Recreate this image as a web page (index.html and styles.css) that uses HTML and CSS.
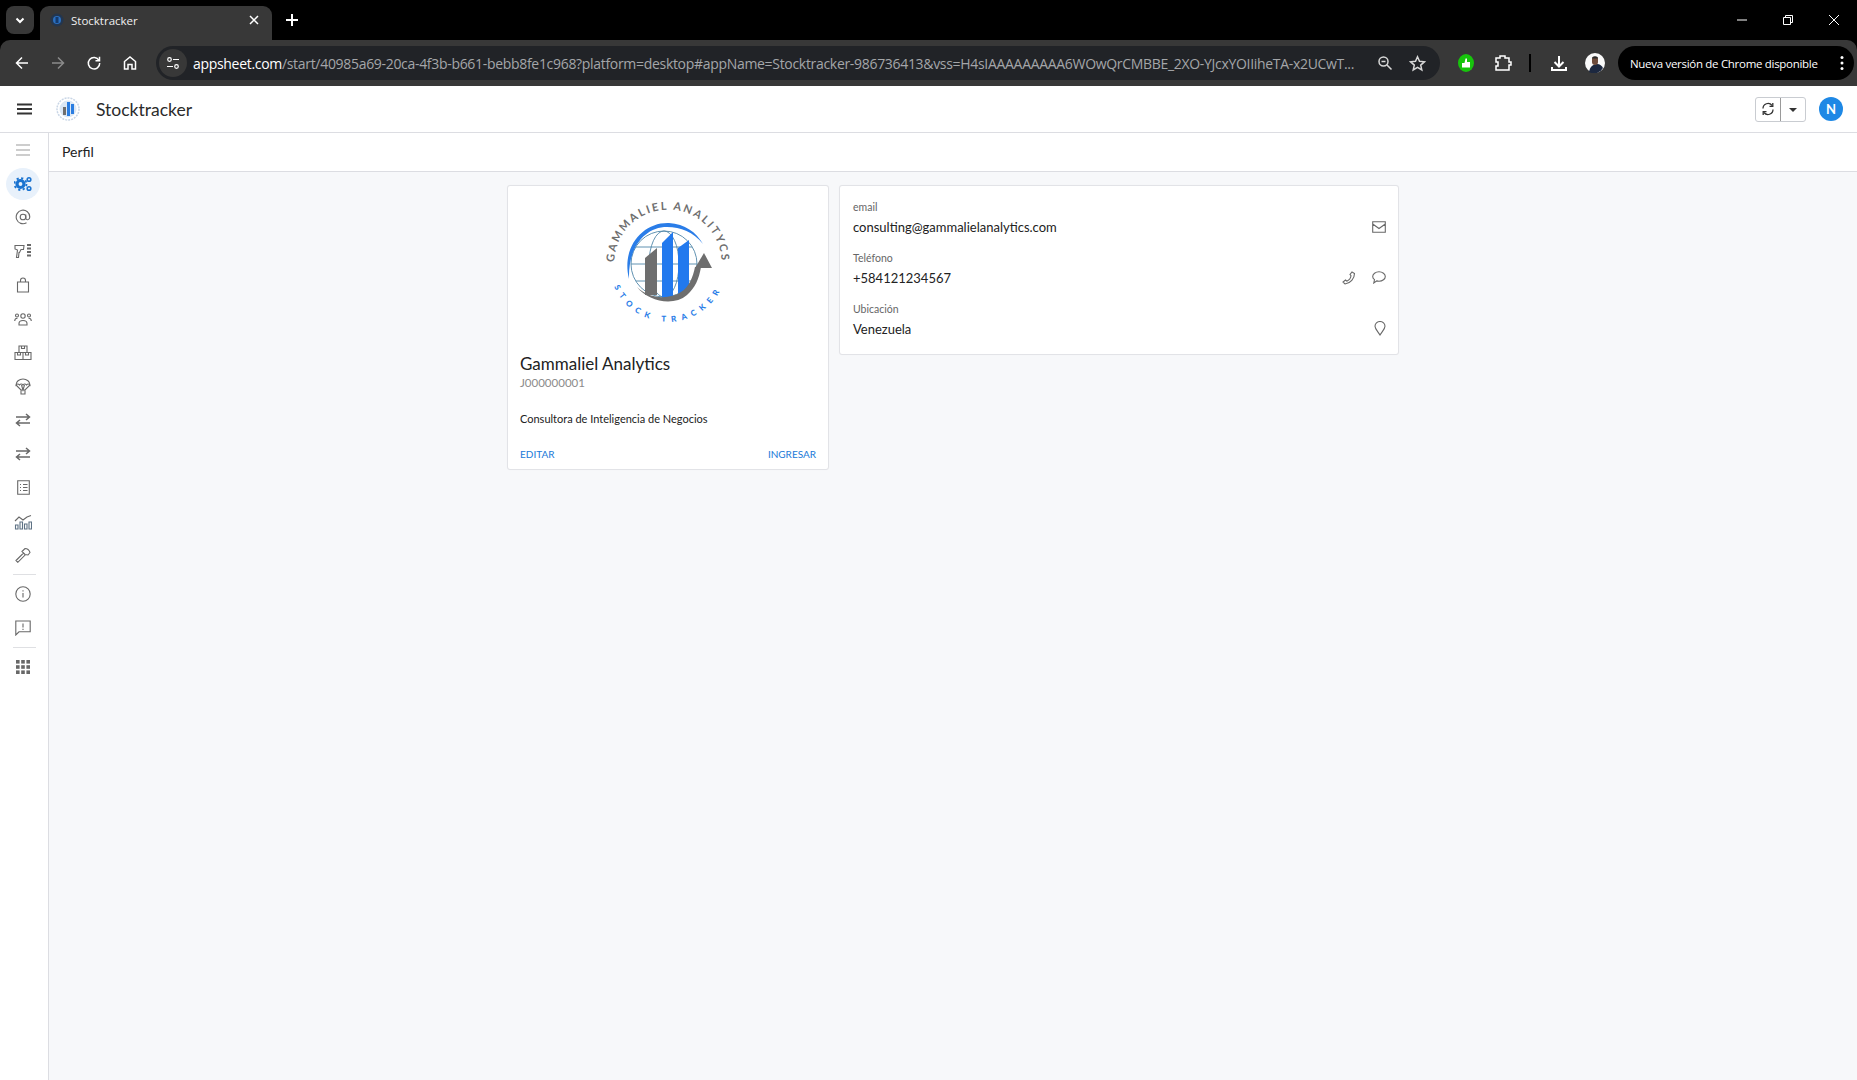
FILE: index.html
```html
<!DOCTYPE html>
<html lang="es">
<head>
<meta charset="utf-8">
<title>Stocktracker</title>
<link rel="stylesheet" href="styles.css">
</head>
<body>
<header class="chrome-tabs">
  <button class="tab-list"><svg width="12" height="12" viewBox="0 0 12 12"><path d="M2.500 4.500 6 8l3.500-3.500" class="st-w2"/></svg></button>
  <div class="tab">
    <svg class="fav" width="14" height="14" viewBox="0 0 14 14"><circle cx="7" cy="7" r="6.500" fill="#23364f"/><circle cx="7" cy="7" r="4" fill="#2a6fc0"/><rect x="5.500" y="4" width="3" height="6" fill="#143a6c"/></svg>
    <span class="tab-title">Stocktracker</span>
    <svg width="12" height="12" viewBox="0 0 12 12"><path d="M2 2l8 8M10 2l-8 8" class="st-w15"/></svg>
  </div>
  <svg class="new-tab" width="14" height="14" viewBox="0 0 14 14"><path d="M7 1v12M1 7h12" class="st-w2"/></svg>
  <div class="win-ctrl">
    <svg width="12" height="12" viewBox="0 0 12 12"><path d="M1 6h10" class="st-w1"/></svg>
    <svg width="12" height="12" viewBox="0 0 12 12"><path d="M1.500 3.500h7v7h-7zM3.500 3.500v-2h7v7h-2" class="st-w1"/></svg>
    <svg width="12" height="12" viewBox="0 0 12 12"><path d="M1 1l10 10M11 1 1 11" class="st-w1"/></svg>
  </div>
</header>

<nav class="chrome-bar">
  <div class="nav-btn"><svg width="16" height="16" viewBox="0 0 16 16"><path d="M14 8H2.500M8 2.500 2.500 8 8 13.500" class="st-w15"/></svg></div>
  <div class="nav-btn"><svg width="16" height="16" viewBox="0 0 16 16"><path d="M2 8h11.500M8 2.500 13.500 8 8 13.500" class="st-g15"/></svg></div>
  <div class="nav-btn"><svg width="16" height="16" viewBox="0 0 16 16"><path d="M13 5.500A5.700 5.700 0 1 0 13.700 8M13.500 1.800v4h-4" class="st-w15"/></svg></div>
  <div class="nav-btn"><svg width="16" height="16" viewBox="0 0 16 16"><path d="M2.500 14V6.500L8 2l5.500 4.500V14H10V9.500H6V14z" class="st-w15"/></svg></div>
  <div class="omnibox">
    <span class="site-btn"><svg width="16" height="16" viewBox="0 0 16 16"><circle cx="4.500" cy="4.500" r="1.800" class="st-w12"/><path d="M8 4.500h6M2 11.500h6" class="st-w12"/><circle cx="11.500" cy="11.500" r="1.800" class="st-w12"/></svg></span>
    <span class="url"><b>appsheet.com</b>/start/40985a69-20ca-4f3b-b661-bebb8fe1c968?platform=desktop#appName=Stocktracker-986736413&amp;vss=H4sIAAAAAAAAA6WOwQrCMBBE_2XO-YJcxYOIIiheTA-x2UCwT...</span>
    <svg class="omni-zoom" width="16" height="16" viewBox="0 0 16 16"><circle cx="6.500" cy="6.500" r="4.500" class="st-l15"/><path d="M10 10l4.500 4.500M4.500 6.500h4" class="st-l15"/></svg>
    <svg class="omni-star" width="17" height="17" viewBox="0 0 17 17"><path d="M8.500 1.800l2 4.500 4.900.5-3.700 3.300 1.100 4.800-4.300-2.500-4.300 2.500 1.100-4.800L1.600 6.800l4.900-.5z" class="st-l15"/></svg>
  </div>
  <div class="ext-group">
    <svg width="16" height="18" viewBox="0 0 16 18"><ellipse cx="8" cy="9" rx="8" ry="9" fill="#17c40c"/><path d="M4 9h2.500l1-4.500h1.500V8H12v5.500H4z" fill="#fff"/></svg>
    <svg class="ext-puzzle" width="18" height="18" viewBox="0 0 18 18"><path d="M2 4h4V2h5v2h4v4h2v3h-2v5H2v-4h2V8H2z" class="st-w15"/></svg>
    <span class="tb-sep"></span>
    <svg class="ext-dl" width="18" height="18" viewBox="0 0 18 18"><path d="M9 2v10M4.500 8 9 12.500 13.500 8M2 13v3h14v-3" class="st-w2"/></svg>
    <svg width="20" height="20" viewBox="0 0 20 20"><circle cx="10" cy="10" r="10" fill="#fafafa"/><path d="M4 19c1-6 5-8 8-8s5 2 6 4a10 10 0 0 1-14 4z" fill="#1c2840"/><path d="M7 5.500C7 3 13 3 13 5.500V9c0 2-1 3-3 3s-3-1-3-3z" fill="#6e4c3c"/><path d="M7 5.500C7 2.500 13 2.500 13 5.500z" fill="#2a2a2a"/></svg>
  </div>
  <div class="update-pill"><span>Nueva versión de Chrome disponible</span><svg width="4" height="16" viewBox="0 0 4 16"><circle cx="2" cy="2.500" r="1.500" fill="#fff"/><circle cx="2" cy="8" r="1.500" fill="#fff"/><circle cx="2" cy="13.500" r="1.500" fill="#fff"/></svg></div>
</nav>

<header class="app-header">
  <svg width="15" height="12" viewBox="0 0 15 12"><path d="M0 1.500h15M0 6h15M0 10.500h15" class="st-d2"/></svg>
  <svg class="app-logo" width="24" height="24" viewBox="0 0 24 24"><circle cx="12" cy="12" r="11" fill="none" stroke="#c9d6e6" stroke-width="1.500" stroke-dasharray="2 1"/><circle cx="12" cy="12" r="8.500" fill="#dbe7f4"/><rect x="7" y="10" width="3" height="8" fill="#6e6e6e"/><rect x="11" y="5" width="3" height="14" fill="#2a7de1"/><rect x="15" y="7" width="3" height="10" fill="#2a7de1"/></svg>
  <span class="app-title">Stocktracker</span>
  <div class="sync-group">
    <span class="sync-btn"><svg width="14" height="14" viewBox="0 0 14 14"><path d="M2 6.500A5 5 0 0 1 11 3.500M12 7.500A5 5 0 0 1 3 10.500" class="st-d12"/><path d="M11.800 1v3.400H8.500M2.200 13V9.600h3.300" class="st-d12"/></svg></span>
    <span class="sync-caret"></span>
  </div>
  <span class="avatar">N</span>
</header>

<div class="app-body">
  <aside class="sidebar">
    <div class="sb-item"><svg width="16" height="12" viewBox="0 0 16 12"><path d="M1 1h14M1 6h14M1 11h14" class="ic-l"/></svg></div>
    <div class="sb-item"><span class="active-bg"><svg width="18" height="16" viewBox="0 0 18 16"><circle cx="6.500" cy="8" r="3.500" fill="none" stroke="#1a73d0" stroke-width="3.200"/><circle cx="6.500" cy="8" r="6" fill="none" stroke="#1a73d0" stroke-width="1.800" stroke-dasharray="2.200 2.500"/><circle cx="15" cy="3.500" r="1.800" fill="none" stroke="#1a73d0" stroke-width="1.600"/><circle cx="15" cy="12.500" r="1.800" fill="none" stroke="#1a73d0" stroke-width="1.600"/></svg></span></div>
    <div class="sb-item"><svg width="16" height="16" viewBox="0 0 16 16"><circle cx="8" cy="8" r="2.800" class="ic"/><path d="M10.800 5.500V9c0 2.500 4 2.300 4-1A6.800 6.800 0 1 0 11.500 13.800" class="ic"/></svg></div>
    <div class="sb-item"><svg width="18" height="15" viewBox="0 0 18 15"><path d="M1 1.500h9l-.5 4H7l-1.500 3H5L4.500 13.500H2.500L3.500 6 1 5z" class="ic"/><path d="M13 1h4M13 4.500h4M13 8h4M13 11.500h4" class="ic-b"/></svg></div>
    <div class="sb-item"><svg width="14" height="16" viewBox="0 0 14 16"><path d="M1.500 5h11v10h-11zM4.500 5V3.500a2.500 2.500 0 0 1 5 0V5" class="ic"/></svg></div>
    <div class="sb-item"><svg width="18" height="14" viewBox="0 0 18 14"><circle cx="9" cy="4" r="2.200" class="ic"/><path d="M5 13v-1.500c0-2 2-3 4-3s4 1 4 3V13z" class="ic"/><circle cx="3" cy="3.500" r="1.500" class="ic"/><circle cx="15" cy="3.500" r="1.500" class="ic"/><path d="M.7 9c0-2 1-2.800 2.800-2.800M17.300 9c0-2-1-2.800-2.800-2.800" class="ic"/></svg></div>
    <div class="sb-item"><svg width="18" height="15" viewBox="0 0 18 15"><path d="M1 7.500h16v7H1zM9 7.500v7M5 1h8v6.500H5zM7.500 1v2.500h3V1M3.500 7.500V10h3V7.500M11.500 7.500V10h3V7.500" class="ic"/></svg></div>
    <div class="sb-item"><svg width="16" height="17" viewBox="0 0 16 17"><path d="M1 7a7 6 0 0 1 14 0c-1-1.300-2.500-1.300-3.500 0-1-1.300-2.500-1.300-3.500 0-1-1.300-2.500-1.300-3.500 0C3.500 5.700 2 5.700 1 7zM1 7l5 5h4l5-5M6 12h4v4H6zM6.500 7 8 12l1.500-5" class="ic"/></svg></div>
    <div class="sb-item"><svg width="16" height="14" viewBox="0 0 16 14"><path d="M1 4h13.500M11 1l3.500 3L11 7M15 10H1.500M5 7l-3.500 3L5 13" class="ic-s"/></svg></div>
    <div class="sb-item"><svg width="16" height="14" viewBox="0 0 16 14"><path d="M1 4h13.500M11 1l3.500 3L11 7M15 10H1.500M5 7l-3.500 3L5 13" class="ic-s"/></svg></div>
    <div class="sb-item"><svg width="13" height="15" viewBox="0 0 13 15"><path d="M.7.700h11.600v13.600H.7zM3 4.500h1M6 4.500h4.500M3 7.500h1M6 7.500h4.500M3 10.500h1M6 10.500h4.500" class="ic"/></svg></div>
    <div class="sb-item"><svg width="18" height="16" viewBox="0 0 18 16"><path d="M1 7l4-4 4 3 4-3 4-1.500" class="ic"/><path d="M1.500 11h2.500v4H1.500zM6 8h2.500v7H6zM10.500 10H13v5h-2.500zM15 8h2.500v7H15z" class="ic-b2"/></svg></div>
    <div class="sb-item"><svg width="16" height="16" viewBox="0 0 16 16"><path d="M1 13.500l7.500-7.500 1.800 1.800L2.800 15.300zM7 4.500 10 1.500c2 0 4 1 5 4l-2 2.500-3-.5-3-3z" class="ic"/></svg></div>
    <div class="sb-sep"></div>
    <div class="sb-item"><svg width="16" height="16" viewBox="0 0 16 16"><circle cx="8" cy="8" r="7.200" class="ic"/><path d="M8 7v4.500M8 4.200v1.400" class="ic"/></svg></div>
    <div class="sb-item"><svg width="16" height="16" viewBox="0 0 16 16"><path d="M.8 1h14.400v10.800H4l-3.200 3.200zM8 3.500v4M8 8.800v1.200" class="ic"/></svg></div>
    <div class="sb-sep"></div>
    <div class="sb-item"><svg width="14" height="14" viewBox="0 0 14 14" class="grid-ic"><rect width="3.600" height="3.600"/><rect x="5.200" width="3.600" height="3.600"/><rect x="10.400" width="3.600" height="3.600"/><rect y="5.200" width="3.600" height="3.600"/><rect x="5.200" y="5.200" width="3.600" height="3.600"/><rect x="10.400" y="5.200" width="3.600" height="3.600"/><rect y="10.400" width="3.600" height="3.600"/><rect x="5.200" y="10.400" width="3.600" height="3.600"/><rect x="10.400" y="10.400" width="3.600" height="3.600"/></svg></div>
  </aside>

  <main class="main">
    <div class="crumb">Perfil</div>
    <div class="content">
      <section class="card profile">
        <svg class="logo" width="130" height="130" viewBox="0 0 130 130">
          <defs>
            <path id="ringTop" d="M11.600 72A53.700 53.700 0 1 1 118.400 72"/>
            <path id="ringBottom" d="M8 81A59 59 0 0 0 122 81"/>
          </defs>
          <text class="ring-top"><textPath href="#ringTop" startOffset="50%" text-anchor="middle">GAMMALIEL ANALITYCS</textPath></text>
          <text class="ring-bot"><textPath href="#ringBottom" startOffset="50%" text-anchor="middle">STOCK TRACKER</textPath></text>
          <g fill="none" stroke="#4f86a8" stroke-width=".9">
            <circle cx="61" cy="67" r="33"/>
            <ellipse cx="61" cy="67" rx="15" ry="33"/>
            <path d="M28 67h66M33 50h56M33 84h56"/>
          </g>
          <path d="M26 82C18 50 40 25 66 26 82 27 93 35 100 47 90 35 78 30 64 30 42 30 25 50 26 82z" fill="#2a7de8"/>
          <path d="M42 61l12-10v47H42z" fill="#6e6e6e"/>
          <path d="M59 46l11-11v65l-11 1z" fill="#2279ee"/>
          <path d="M75 51l11-8v48l-11 9z" fill="#2279ee"/>
          <path d="M34 90C45 104 70 110 84 98 92 91 96 82 98 70H92C90 80 86 90 78 95 66 103 46 102 34 90z" fill="#6e6e6e"/>
          <path d="M101 56 92 71h17z" fill="#6e6e6e"/>
        </svg>
        <h1 class="p-name">Gammaliel Analytics</h1>
        <div class="p-id">J000000001</div>
        <p class="p-desc">Consultora de Inteligencia de Negocios</p>
        <div class="p-actions"><a>EDITAR</a><a>INGRESAR</a></div>
      </section>
      <section class="card details">
        <div class="row">
          <div><div class="lbl">email</div><div class="val">consulting@gammalielanalytics.com</div></div>
          <div class="acts"><svg width="14" height="12" viewBox="0 0 14 12"><path d="M.7.700h12.600v10.600H.7zM.7 3l6.300 4.500L13.300 3" class="ic"/></svg></div>
        </div>
        <div class="row">
          <div><div class="lbl">Teléfono</div><div class="val">+584121234567</div></div>
          <div class="acts"><svg width="14" height="14" viewBox="0 0 14 14"><path d="M10 1l2.500 1.500c0 5-4 10-9.500 10.500L1 11l2.500-2 1.300 1.200c2-1 4-3.500 4.200-5.500L8 3.500z" class="ic"/></svg><svg width="14" height="13" viewBox="0 0 14 13"><path d="M7 .8c3.500 0 6.300 2.200 6.300 4.700S10.500 10.200 7 10.200c-.8 0-1.500-.1-2.200-.3L1.800 12l.7-3.400C1.300 7.800.7 6.700.7 5.500.7 3 3.500.8 7 .8z" class="ic"/></svg></div>
        </div>
        <div class="row">
          <div><div class="lbl">Ubicación</div><div class="val">Venezuela</div></div>
          <div class="acts"><svg width="12" height="15" viewBox="0 0 12 15"><path d="M6 14C4 10.500 1 8 1 5.300A5 4.800 0 0 1 11 5.300C11 8 8 10.500 6 14z" class="ic"/></svg></div>
        </div>
      </section>
    </div>
  </main>
</div>
</body>
</html>
```

FILE: styles.css
```css
* { box-sizing: border-box; }
html, body { margin: 0; height: 100%; }
body {
  width: 1857px;
  height: 1080px;
  overflow: hidden;
  display: flex;
  flex-direction: column;
  font-family: Lato, "Noto Sans", sans-serif;
  background: #000;
  color: #222;
}
svg { display: block; flex: none; }

/* stroke helpers */
.st-w1, .st-w12, .st-w15, .st-w2, .st-g15, .st-l15, .st-d2, .st-d12 { fill: none; }
.st-w1 { stroke: #fff; stroke-width: 1; }
.st-w12 { stroke: #fff; stroke-width: 1.2; }
.st-w15 { stroke: #fff; stroke-width: 1.5; }
.st-w2 { stroke: #fff; stroke-width: 2; }
.st-g15 { stroke: #8a8a8a; stroke-width: 1.5; }
.st-l15 { stroke: #d8d8d8; stroke-width: 1.5; }
.st-d2 { stroke: #333; stroke-width: 2; }
.st-d12 { stroke: #333; stroke-width: 1.3; }

/* tab strip */
.chrome-tabs {
  height: 40px;
  flex: none;
  background: #000;
  display: flex;
  align-items: flex-end;
  padding-left: 6px;
  color: #fff;
}
.tab-list {
  width: 28px;
  height: 28px;
  margin-bottom: 6px;
  border: 0;
  border-radius: 8px;
  background: #383838;
  display: flex;
  align-items: center;
  justify-content: center;
  padding: 0;
}
.tab {
  width: 232px;
  height: 34px;
  margin-left: 6px;
  padding: 0 12px 6px 10px;
  background: #383838;
  border-radius: 9px 9px 0 0;
  display: flex;
  align-items: center;
  font: 11.500px "Open Sans", "Noto Sans", sans-serif;
}
.tab-title { flex: 1; margin-left: 7px; color: #f0f0f0; }
.new-tab { margin: 0 0 13px 13px; }
.win-ctrl {
  margin-left: auto;
  margin-bottom: 14px;
  padding-right: 17px;
  display: flex;
  gap: 34px;
}

/* toolbar */
.chrome-bar {
  height: 46px;
  flex: none;
  background: #383838;
  border-radius: 10px 10px 0 0;
  display: flex;
  align-items: center;
  padding-left: 4px;
}
.nav-btn {
  width: 36px;
  height: 36px;
  display: flex;
  align-items: center;
  justify-content: center;
}
.omnibox {
  width: 1284px;
  height: 34px;
  margin-left: 8px;
  border-radius: 17px;
  background: #212327;
  display: flex;
  align-items: center;
  padding: 0 14px 0 3px;
  gap: 6px;
}
.site-btn {
  width: 28px;
  height: 28px;
  border-radius: 50%;
  background: #383838;
  display: flex;
  align-items: center;
  justify-content: center;
  flex: none;
}
.url {
  flex: 1;
  min-width: 0;
  margin-right: 12px;
  white-space: nowrap;
  font: 14px "Open Sans", "Noto Sans", sans-serif;
  letter-spacing: -.31px;
  color: #a4a6a9;
}
.url b { font-weight: 400; color: #fff; }
.omni-zoom { margin-right: 10px; }
.ext-group {
  display: flex;
  align-items: center;
  margin-left: 18px;
  gap: 17px;
}
.ext-puzzle { margin-left: 3px; }
.ext-dl { margin-left: 2px; }
.tb-sep { width: 2px; height: 18px; background: #000; }
.update-pill {
  width: 236px;
  height: 34px;
  margin-left: 13px;
  padding: 0 10px 0 12px;
  border-radius: 17px;
  background: #000;
  color: #fff;
  display: flex;
  align-items: center;
  justify-content: space-between;
  white-space: nowrap;
  font: 11.500px "Open Sans", "Noto Sans", sans-serif;
  letter-spacing: -.3px;
}

/* app header */
.app-header {
  height: 47px;
  flex: none;
  background: #fff;
  border-bottom: 1px solid #dcdde2;
  display: flex;
  align-items: center;
  padding: 0 14px 0 17px;
}
.app-logo { margin-left: 24px; }
.app-title { margin-left: 16px; font-size: 17.500px; color: #2b2b2b; }
.sync-group {
  margin-left: auto;
  width: 51px;
  height: 25px;
  border: 1px solid #c9ccd1;
  border-radius: 3px;
  display: flex;
}
.sync-btn {
  width: 25px;
  border-right: 1px solid #9a9a9a;
  display: flex;
  align-items: center;
  justify-content: center;
}
.sync-caret {
  width: 0;
  height: 0;
  margin: 10px 0 0 8px;
  border: 4px solid transparent;
  border-top: 4px solid #333;
  border-bottom: 0;
}
.avatar {
  width: 24px;
  height: 24px;
  margin-left: 13px;
  border-radius: 50%;
  background: #1e88e5;
  color: #fff;
  font-size: 13px;
  font-weight: 700;
  display: flex;
  align-items: center;
  justify-content: center;
}

/* app body */
.app-body { flex: 1; display: flex; min-height: 0; }
.sidebar {
  width: 49px;
  flex: none;
  border-right: 1px solid #dcdde2;
  background: #fff;
  padding-right: 2px;
  display: flex;
  flex-direction: column;
  align-items: stretch;
}
.sb-item {
  height: 33.800px;
  flex: none;
  display: flex;
  align-items: center;
  justify-content: center;
}
.active-bg {
  width: 34px;
  height: 32px;
  border-radius: 50%;
  background: #e8f1fb;
  display: flex;
  align-items: center;
  justify-content: center;
}
.sb-sep { height: 1px; margin: 2px 10px 2px 13px; background: #dfe0e3; flex: none; }
.ic, .ic-l, .ic-s, .ic-b, .ic-b2 { fill: none; stroke: #686868; stroke-width: 1.1; }
.ic-l { stroke: #9b9b9b; }
.ic-s { stroke-width: 1.5; }
.ic-b { stroke-width: 2; }
.ic-b2 { stroke: #5d7184; }
.grid-ic { fill: #686868; }

.main { flex: 1; display: flex; flex-direction: column; min-width: 0; background: #f7f8fa; }
.crumb {
  height: 39px;
  flex: none;
  padding: 0 0 1px 13px;
  background: #fff;
  border-bottom: 1px solid #dcdde2;
  display: flex;
  align-items: center;
  font-size: 14px;
  color: #222;
}
.content {
  display: flex;
  justify-content: center;
  align-items: flex-start;
  gap: 10px;
  padding-top: 13px;
}
.card {
  background: #fff;
  border: 1px solid #e2e3e7;
  border-radius: 3px;
  box-shadow: 0 0 1px rgba(0, 0, 0, .05);
}
.profile {
  width: 322px;
  height: 285px;
  padding: 0 12px;
  display: flex;
  flex-direction: column;
}
.logo { margin: 11px auto 0; }
.ring-top { font: 700 11px Lato, sans-serif; letter-spacing: 2.100px; fill: #6e6e6e; }
.ring-bot { font: 900 8px Lato, sans-serif; letter-spacing: 5.500px; fill: #2a7de8; }
.p-name { margin: 26px 0 0; font-size: 17px; font-weight: 400; line-height: 21px; color: #222; }
.p-id { margin-top: 2px; font-size: 11.500px; line-height: 14px; color: #8b8b8b; }
.p-desc { margin: 21px 0 0; font-size: 11px; line-height: 16px; color: #222; }
.p-actions {
  margin-top: auto;
  padding-bottom: 8px;
  display: flex;
  justify-content: space-between;
  font-size: 10px;
  line-height: 14px;
  color: #2079d8;
}
.details { width: 560px; height: 170px; padding: 14px 12px 0 13px; }
.row { height: 51px; display: flex; justify-content: space-between; }
.lbl { font-size: 10.500px; line-height: 14px; color: #666; }
.val { margin-top: 5px; font-size: 13px; line-height: 17px; color: #222; }
.acts { display: flex; align-items: center; gap: 16px; padding-top: 13px; height: 40px; }
```
